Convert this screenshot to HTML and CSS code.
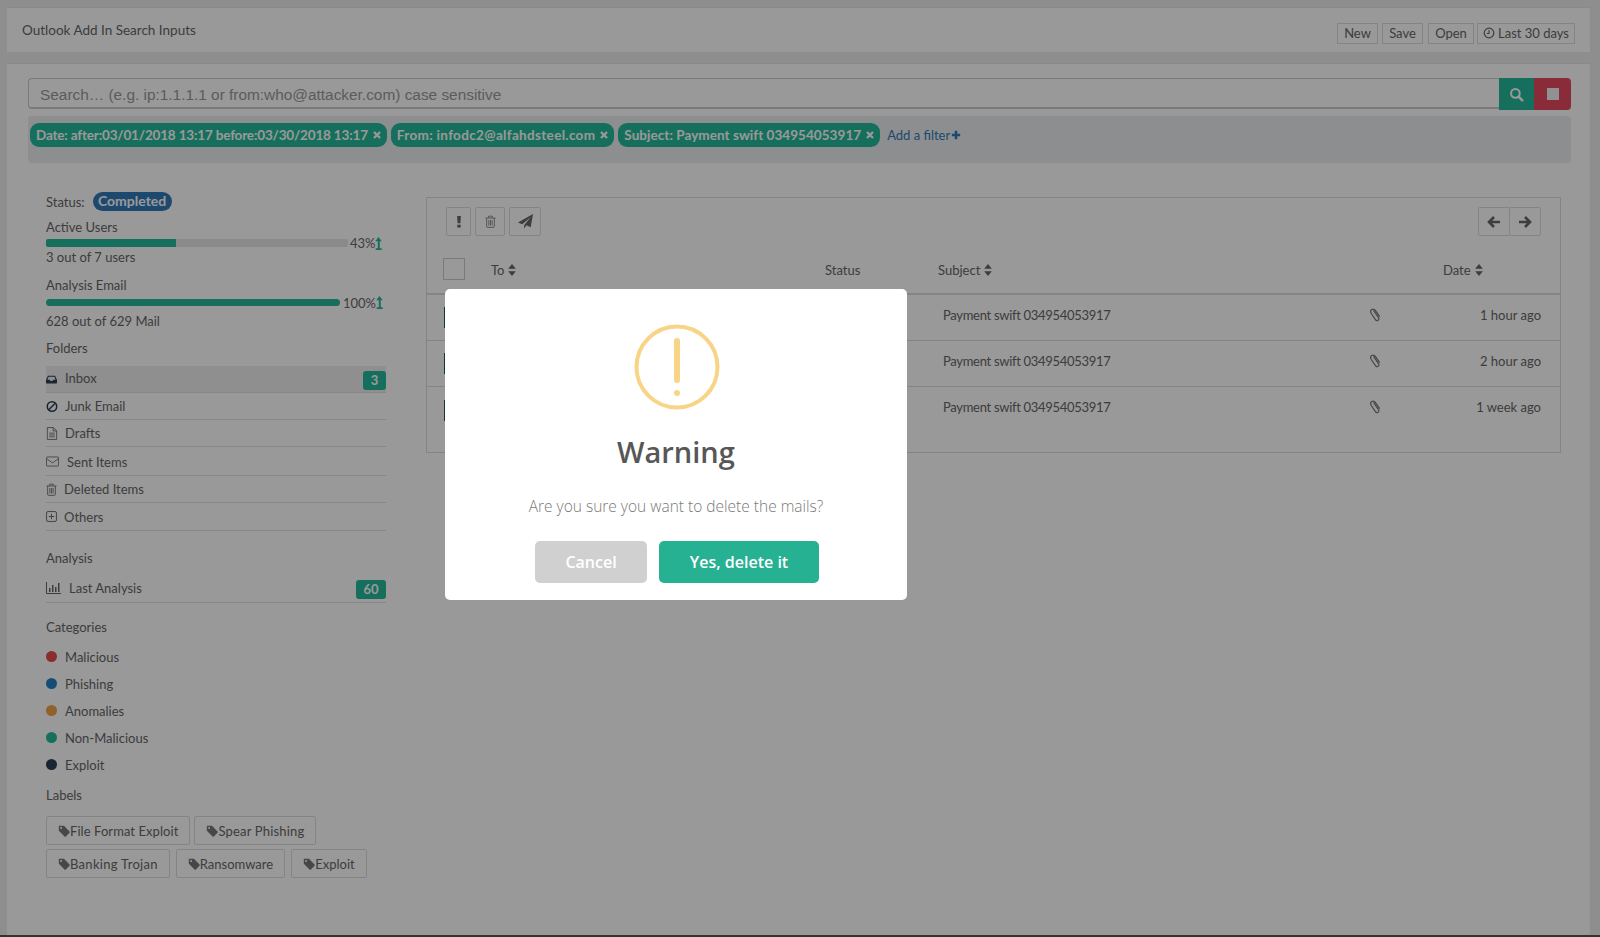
FILE: index.html
```html
<!DOCTYPE html>
<html lang="en">
<head>
<meta charset="utf-8">
<title>Outlook Add In Search Inputs</title>
<link rel="stylesheet" href="styles.css">
</head>
<body>
<svg class="sprite" width="0" height="0" aria-hidden="true">
  <symbol id="i-clock" viewBox="0 0 16 16"><circle cx="8" cy="8" r="6.4" fill="none" stroke="currentColor" stroke-width="1.6"/><path d="M8 4v4.6H5" fill="none" stroke="currentColor" stroke-width="1.4"/></symbol>
  <symbol id="i-x" viewBox="0 0 12 12"><path d="M2.4 2.4l7.2 7.2M9.6 2.4l-7.2 7.2" stroke="currentColor" stroke-width="2.8" fill="none"/></symbol>
  <symbol id="i-plus" viewBox="0 0 12 12"><path d="M6 1v10M1 6h10" stroke="currentColor" stroke-width="3" fill="none"/></symbol>
  <symbol id="i-search" viewBox="0 0 16 16"><circle cx="6.8" cy="6.8" r="4.6" fill="none" stroke="currentColor" stroke-width="2.2"/><path d="M10.2 10.2l4 4" stroke="currentColor" stroke-width="2.6" stroke-linecap="round"/></symbol>
  <symbol id="i-up" viewBox="0 0 8 14"><path d="M4.500 0L8 4.500H5.900v7.500H8v2H1.500v-2h2.300V4.500H1z" fill="currentColor"/></symbol>
  <symbol id="i-inbox" viewBox="0 0 16 14"><path d="M3.4 1.5h9.2c.4 0 .7.2.9.6L16 7.600V11.500c0 .8-.6 1.400-1.400 1.400H1.400C.6 12.900 0 12.300 0 11.500V7.600L2.500 2.100c.2-.4.500-.6.900-.6zM3.800 3L2 7.400h3.600L6.600 9.300h2.800l1-1.900H14L12.200 3z" fill="currentColor" fill-rule="evenodd"/></symbol>
  <symbol id="i-ban" viewBox="0 0 14 14"><circle cx="7" cy="7" r="5.500" fill="none" stroke="currentColor" stroke-width="1.800"/><path d="M3.200 10.800l7.600-7.600" stroke="currentColor" stroke-width="1.800"/></symbol>
  <symbol id="i-file" viewBox="0 0 12 14"><path d="M1 .6h6.500L11 4.100v9.300H1zM7.300.8v3.500H11M3 6.600h6M3 8.600h6M3 10.600h6" fill="none" stroke="currentColor" stroke-width=".9"/></symbol>
  <symbol id="i-mail" viewBox="0 0 14 11"><path d="M1.200.6h11.600c.4 0 .7.300.7.700v8.400c0 .4-.3.700-.7.700H1.200c-.4 0-.7-.3-.7-.7V1.300c0-.4.300-.7.700-.7zM.8 2.600L7 7l6.200-4.400" fill="none" stroke="currentColor" stroke-width=".9"/></symbol>
  <symbol id="i-trash" viewBox="0 0 12 14"><path d="M.5 3.200h11M4 3V1.200h4V3M1.800 3.300v9c0 .7.400 1.100 1 1.100h6.400c.6 0 1-.4 1-1.100v-9M4.200 5.400v6M6 5.400v6M7.800 5.400v6" fill="none" stroke="currentColor" stroke-width=".9"/></symbol>
  <symbol id="i-plusbox" viewBox="0 0 12 12"><rect x=".6" y=".6" width="10.800" height="10.800" rx="1.600" fill="none" stroke="currentColor"/><path d="M6 3v6M3 6h6" stroke="currentColor"/></symbol>
  <symbol id="i-chart" viewBox="0 0 15 12"><path d="M.5 0v11.500H15" fill="none" stroke="currentColor"/><path d="M3 6h1.500v4H3zM6 3h1.500v7H6zM9 5h1.500v5H9zM12 1h1.500v9H12z" fill="currentColor"/></symbol>
  <symbol id="i-tag" viewBox="0 0 12 12"><path d="M1.200.8h4.200c.3 0 .6.100.8.300l5.300 5.300c.4.400.4 1 0 1.400l-3.600 3.600c-.4.400-1 .4-1.400 0L1.100 6.100C.9 5.900.8 5.600.8 5.300V1.200c0-.2.200-.4.400-.4zM3.100 2.100a1 1 0 1 0 0 2 1 1 0 0 0 0-2z" fill="currentColor" fill-rule="evenodd"/></symbol>
  <symbol id="i-bang" viewBox="0 0 6 14"><path d="M1 1h4l-.5 8h-3zM1.200 10.500h3.600V13.500H1.200z" fill="currentColor"/></symbol>
  <symbol id="i-send" viewBox="0 0 16 16"><path d="M16 0L13.500 14 9 12l-2.500 3.500V12l7-8.500L4.500 10.800 0 9z" fill="currentColor"/></symbol>
  <symbol id="i-left" viewBox="0 0 14 14"><path d="M7 2L2 7l5 5M2.500 7H13" fill="none" stroke="currentColor" stroke-width="2.600"/></symbol>
  <symbol id="i-right" viewBox="0 0 14 14"><path d="M7 2l5 5-5 5M11.500 7H1" fill="none" stroke="currentColor" stroke-width="2.600"/></symbol>
  <symbol id="i-sort" viewBox="0 0 8 12"><path d="M4 0l3.800 4.800H.2zM4 12L.2 7.200h7.600z" fill="currentColor"/></symbol>
  <symbol id="i-clip" viewBox="0 0 12 14"><path d="M3.500 3.400l5 7.200c.7 1 .4 2.100-.4 2.600-.9.600-2 .4-2.700-.6L1.300 6.500C.3 5 .6 3.400 1.800 2.600c1.200-.8 2.700-.5 3.700 1l4.200 6.100" fill="none" stroke="currentColor" stroke-width="1.200" transform="translate(1 -1)"/></symbol>
</svg>

<div class="app">
  <header class="topbar">
    <h1 class="page-title">Outlook Add In Search Inputs</h1>
    <div class="top-actions">
      <button class="btn-top new">New</button>
      <button class="btn-top save">Save</button>
      <button class="btn-top open">Open</button>
      <button class="btn-top range"><svg class="ic-clock"><use href="#i-clock"/></svg>Last 30 days</button>
    </div>
  </header>

  <main class="panel">
    <div class="search">
      <input class="search-input" type="text" placeholder="Search… (e.g. ip:1.1.1.1 or from:who@attacker.com) case sensitive">
      <button class="search-go"><svg class="ic-search"><use href="#i-search"/></svg></button>
      <button class="search-stop"><span class="stop-square"></span></button>
    </div>
    <div class="filters">
      <span class="chip chip-date">Date: after:03/01/2018 13:17 before:03/30/2018 13:17<svg class="ic-x"><use href="#i-x"/></svg></span>
      <span class="chip chip-from">From: infodc2@alfahdsteel.com<svg class="ic-x"><use href="#i-x"/></svg></span>
      <span class="chip chip-subject">Subject: Payment swift 034954053917<svg class="ic-x"><use href="#i-x"/></svg></span>
      <a class="add-filter">Add a filter<svg class="ic-plus"><use href="#i-plus"/></svg></a>
    </div>

    <div class="content">
      <aside class="sidebar">
        <div class="status-row"><span>Status:</span><span class="pill">Completed</span></div>

        <div class="label active-label">Active Users</div>
        <div class="stat stat-a">
          <div class="track"><div class="fill" style="width:43%"></div></div>
          <span class="pct">43%</span><svg class="ic-up"><use href="#i-up"/></svg>
        </div>
        <div class="label">3 out of 7 users</div>

        <div class="label analysis-label">Analysis Email</div>
        <div class="stat stat-b">
          <div class="track"><div class="fill full" style="width:100%"></div></div>
          <span class="pct">100%</span><svg class="ic-up"><use href="#i-up"/></svg>
        </div>
        <div class="label mail-label">628 out of 629 Mail</div>

        <div class="label folders-label">Folders</div>
        <ul class="nav">
          <li class="nav-item selected h27"><svg class="ni w16 dark"><use href="#i-inbox"/></svg><span class="t3">Inbox</span><b class="count">3</b></li>
          <li class="nav-item h27"><svg class="ni w12 dark"><use href="#i-ban"/></svg><span class="t7">Junk Email</span></li>
          <li class="nav-item h27"><svg class="ni w12"><use href="#i-file"/></svg><span class="t7">Drafts</span></li>
          <li class="nav-item h29"><svg class="ni w14"><use href="#i-mail"/></svg><span class="t7 sent">Sent Items</span></li>
          <li class="nav-item h27"><svg class="ni w11"><use href="#i-trash"/></svg><span class="t7">Deleted Items</span></li>
          <li class="nav-item h28"><svg class="ni w11"><use href="#i-plusbox"/></svg><span class="t7">Others</span></li>
        </ul>

        <div class="label analysis-head">Analysis</div>
        <ul class="nav nav-analysis">
          <li class="nav-item h29"><svg class="ni w15"><use href="#i-chart"/></svg><span class="t8">Last Analysis</span><b class="count">60</b></li>
        </ul>

        <div class="label categories-head">Categories</div>
        <ul class="cats">
          <li class="cat"><i class="dot red"></i>Malicious</li>
          <li class="cat"><i class="dot blue"></i>Phishing</li>
          <li class="cat"><i class="dot orange"></i>Anomalies</li>
          <li class="cat"><i class="dot green"></i>Non-Malicious</li>
          <li class="cat"><i class="dot navy"></i>Exploit</li>
        </ul>

        <div class="label labels-head">Labels</div>
        <div class="tags">
          <span class="tag tag-file"><svg class="ic-tag"><use href="#i-tag"/></svg>File Format Exploit</span>
          <span class="tag"><svg class="ic-tag"><use href="#i-tag"/></svg>Spear Phishing</span>
          <span class="tag tag-bank"><svg class="ic-tag"><use href="#i-tag"/></svg>Banking Trojan</span>
          <span class="tag tag-ransom"><svg class="ic-tag"><use href="#i-tag"/></svg>Ransomware</span>
          <span class="tag tag-ransom"><svg class="ic-tag"><use href="#i-tag"/></svg>Exploit</span>
        </div>
      </aside>

      <section class="mail">
        <div class="toolbar">
          <div class="tool-group">
            <button class="tool b1"><svg class="ic-bang"><use href="#i-bang"/></svg></button>
            <button class="tool b2"><svg class="ic-trash"><use href="#i-trash"/></svg></button>
            <button class="tool b3"><svg class="ic-send"><use href="#i-send"/></svg></button>
          </div>
          <div class="pager">
            <button class="page-btn"><svg class="ic-arrow"><use href="#i-left"/></svg></button>
            <button class="page-btn"><svg class="ic-arrow"><use href="#i-right"/></svg></button>
          </div>
        </div>
        <div class="mail-grid mail-head">
          <div><span class="head-check"></span></div>
          <div>To<svg class="ic-sort"><use href="#i-sort"/></svg></div>
          <div>Status</div>
          <div>Subject<svg class="ic-sort"><use href="#i-sort"/></svg></div>
          <div></div>
          <div>Date<svg class="ic-sort"><use href="#i-sort"/></svg></div>
        </div>
        <div class="mail-grid mail-row">
          <div><span class="row-check"></span></div><div></div><div></div>
          <div class="subject">Payment swift 034954053917</div>
          <div><svg class="ic-clip"><use href="#i-clip"/></svg></div>
          <div class="when">1 hour ago</div>
        </div>
        <div class="mail-grid mail-row">
          <div><span class="row-check"></span></div><div></div><div></div>
          <div class="subject">Payment swift 034954053917</div>
          <div><svg class="ic-clip"><use href="#i-clip"/></svg></div>
          <div class="when">2 hour ago</div>
        </div>
        <div class="mail-grid mail-row last">
          <div><span class="row-check"></span></div><div></div><div></div>
          <div class="subject">Payment swift 034954053917</div>
          <div><svg class="ic-clip"><use href="#i-clip"/></svg></div>
          <div class="when">1 week ago</div>
        </div>
      </section>
    </div>
  </main>
</div>

<div class="overlay">
  <div class="modal">
    <svg class="warn" viewBox="0 0 86 86" aria-hidden="true">
      <circle cx="43" cy="43" r="40.500" fill="none" stroke="#f8d486" stroke-width="4"/>
      <rect x="40" y="14" width="6" height="45" rx="3" fill="#f8d486"/>
      <circle cx="43" cy="69" r="3" fill="#f8d486"/>
    </svg>
    <h2 class="modal-title">Warning</h2>
    <p class="modal-text">Are you sure you want to delete the mails?</p>
    <div class="modal-actions">
      <button class="m-btn cancel">Cancel</button>
      <button class="m-btn confirm">Yes, delete it</button>
    </div>
  </div>
</div>
</body>
</html>
```
FILE: styles.css
```css
* { box-sizing: border-box; }
html, body { margin: 0; padding: 0; }
body {
  width: 1600px; height: 937px; overflow: hidden;
  background: #ededed; color: #666;
  font-family: Lato, "Open Sans", sans-serif; font-size: 13px;
}
.sprite { position: absolute; }
ul { list-style: none; margin: 0; padding: 0; }
button { font-family: inherit; cursor: pointer; }
svg { display: inline-block; flex: none; }

.app {
  height: 937px; padding: 7px 10px 0 7px;
  border-bottom: 2px solid #555;
  display: flex; flex-direction: column; gap: 11px;
}
.topbar {
  height: 45px; flex: none; background: #fff;
  display: flex; align-items: center; justify-content: space-between;
  padding: 0 15px;
  border-top: 1px solid #e6e6e6;
}
.page-title { margin: 0; font-size: 13.500px; font-weight: 400; color: #666; }
.top-actions { display: flex; align-items: center; margin-top: 6px; gap: 4px; }
.btn-top {
  height: 21px; padding: 0; font-size: 13px; color: #666;
  background: #fff; border: 1px solid #ddd; display: flex; align-items: center; justify-content: center;
}
.new { width: 41px; } .save { width: 41px; margin-right: 1px; } .open { width: 46px; margin-right: -1px; } .range { width: 98px; gap: 3px; }
.ic-clock { width: 12px; height: 12px; }

.panel {
  flex: 1; background: #fff; border-top: 1px solid #e6e6e6;
  padding: 14px 19px 0 21px;
}
.search { display: flex; height: 31px; }
.search-input {
  flex: 1; min-width: 0; height: 31px; padding: 3px 11px 0 11px;
  border: 1px solid #ccc; border-bottom-width: 2px; border-right: 0; border-radius: 4px 0 0 4px; outline: none;
  font-family: "Liberation Sans", sans-serif; font-size: 15.400px; color: #777;
}
.search-input::placeholder { color: #999; opacity: 1; }
.search-go, .search-stop { border: 0; padding: 0; display: flex; align-items: center; justify-content: center; color: #fff; height: 32px; }
.search-go { width: 35px; background: #26b99a; padding-right: 1px; }
.search-stop { width: 37px; background: #e5495f; border-radius: 0 4px 4px 0; }
.ic-search { width: 15px; height: 15px; }
.stop-square { width: 12px; height: 12px; background: #f2f2f2; }

.filters {
  height: 47px; margin-top: 7px; padding: 7px 2px; background: #ebedf0; border-radius: 4px;
  display: flex; align-items: flex-start; gap: 4px;
}
.chip {
  height: 24px; padding: 0 5px 0 6px; border-radius: 9px; background: #26b99a; color: #fff;
  font-weight: 700; font-size: 13.500px; display: flex; align-items: center; gap: 4px; white-space: nowrap;
}
.chip-date { letter-spacing: -.17px; }
.chip-from { letter-spacing: .33px; }
.chip-subject { letter-spacing: .05px; }
.ic-x { width: 10px; height: 10px; }
.add-filter { margin: 4px 0 0 3px; color: #337ab7; display: flex; align-items: center; gap: 1px; font-size: 13px; }
.ic-plus { width: 10px; height: 10px; }

.content { display: flex; padding: 29px 10px 0 18px; }
.sidebar { width: 340px; flex: none; }
.label { height: 16px; line-height: 16px; }
.status-row { height: 19px; display: flex; align-items: center; gap: 8px; }
.pill { height: 19px; width: 79px; border-radius: 10px; background: #337ab7; color: #fff; font-weight: 700; font-size: 14px; text-align: center; line-height: 18px; }
.active-label { margin-top: 8px; }
.stat { display: flex; align-items: center; color: #666; }
.stat-a { height: 8px; margin: 4px 0 2px; }
.stat-a .track { width: 302px; height: 8px; }
.stat-b { height: 7px; margin: 6px 0 7px; }
.stat-b .track { width: 294px; height: 7px; }
.track { background: #e6e6e6; border-radius: 2px; overflow: hidden; }
.stat-b .track { background: #26b99a; border-radius: 4px; }
.fill { height: 100%; background: #26b99a; }
.pct { margin-left: 2px; width: 32px; line-height: 8px; font-size: 13px; }
.stat-b .pct { width: 33px; margin-left: 3px; }
.stat-a .pct { width: 25px; }
.ic-up { width: 8px; height: 13px; color: #26b99a; margin-left: -1px; }
.analysis-label { margin-top: 12px; }
.folders-label { margin-top: 11px; }
.nav { margin-top: 10px; }
.nav-item {
  display: flex; align-items: center; position: relative;
  border-bottom: 1px solid #e0e0e0;
}
.h27 { height: 27px; } .h28 { height: 28px; } .h29 { height: 29px; }
.selected { background: #eee; }
.selected .t3 { margin-top: -2px; }
.ni { height: 13px; color: #666; }
.dark { color: #2a3f54; }
.w16 { width: 11px; } .w12 { width: 12px; } .w14 { width: 13px; height: 11px; } .w11 { width: 11px; } .w15 { width: 15px; height: 12px; }
.nav-item span { margin-left: 7px; }
.nav-item .t3 { margin-left: 8px; }
.nav-item .t8 { margin-left: 8px; }
.nav-item .sent { margin-left: 8px; padding-top: 2px; }
.count {
  margin: 2px 0 0 auto; height: 19px; min-width: 23px; padding: 0 7.500px; border-radius: 3px;
  background: #26b99a; color: #fff; font-size: 13px; font-weight: 700; text-align: center; line-height: 19px;
}
.analysis-head { margin-top: 19px; }
.nav-analysis { margin-top: 8px; }
.categories-head { margin-top: 16px; }
.cats { margin-top: 8px; }
.cat { height: 27px; display: flex; align-items: center; gap: 8px; }
.dot { width: 11px; height: 11px; border-radius: 50%; }
.red { background: #e74c4c; } .blue { background: #2383c4; } .orange { background: #f0a04b; } .green { background: #26b99a; } .navy { background: #2a3f54; }
.labels-head { margin-top: 9px; }
.tags { margin-top: 13px; display: flex; flex-wrap: wrap; gap: 4px 5px; width: 330px; letter-spacing: .18px; }
.tag {
  height: 29px; padding: 0 11px; border: 1px solid #ddd; border-radius: 2px;
  display: flex; align-items: center; gap: 0;
}
.tag-file { letter-spacing: .07px; margin-right: -1px; }
.tag-bank { letter-spacing: .3px; margin-right: 1px; }
.tag-ransom { letter-spacing: 0; margin-right: 1px; }
.ic-tag { width: 12px; height: 12px; color: #777; }

.mail { flex: 1; margin: 5px 0 0 40px; border: 1px solid #ddd; height: 256px; }
.toolbar { height: 53px; padding: 9px 19px 0 19px; display: flex; justify-content: space-between; align-items: flex-start; }
.tool-group { display: flex; gap: 4px; }
.tool, .page-btn { height: 29px; padding: 0; background: #fff; border: 1px solid #ddd; border-radius: 2px; display: flex; align-items: center; justify-content: center; color: #666; }
.b1 { width: 25px; } .b2 { width: 30px; } .b3 { width: 32px; }
.ic-bang { width: 6px; height: 13px; }
.ic-trash { width: 11px; height: 13px; color: #777; }
.ic-send { width: 15px; height: 15px; }
.pager { display: flex; margin-left: -1px; }
.page-btn { width: 32px; }
.page-btn + .page-btn { margin-left: -1px; }
.ic-arrow { width: 14px; height: 14px; }

.mail-grid { display: grid; grid-template-columns: 64px 334px 113px 431px 74px 1fr; align-items: center; }
.mail-head { height: 44px; padding-bottom: 4px; border-bottom: 2px solid #ddd; }
.mail-head > div { display: flex; align-items: center; gap: 4px; }
.head-check { width: 22px; height: 22px; margin: 0 0 2px 16px; border: 1px solid #ccc; }
.ic-sort { width: 8px; height: 12px; }
.mail-row { height: 46px; border-bottom: 1px solid #ddd; color: #666; }
.mail-row.last { border-bottom: 0; }
.row-check { display: block; width: 20px; height: 21px; margin: 0 0 0 17px; background: #1a5f50; }
.subject { padding-left: 5px; margin-top: -6px; letter-spacing: -.3px; }
.when { text-align: right; padding-right: 19px; margin-top: -6px; }
.ic-clip { width: 12px; height: 14px; color: #777; margin-top: -6px; display: block; }

.overlay { position: fixed; inset: 0; background: rgba(0,0,0,.4); }
.modal {
  position: absolute; left: 445px; top: 289px; width: 462px; height: 311px;
  background: #fff; border-radius: 5px;
  display: flex; flex-direction: column; align-items: center;
  padding-top: 35px; font-family: "Open Sans", sans-serif;
}
.warn { width: 86px; height: 86px; margin-left: 1px; }
.modal-title { margin: 21px 0 0; font-size: 29px; line-height: 42px; font-weight: 600; color: #575757; }
.modal-text { margin: 22px 0 0; font-size: 15.500px; line-height: 22px; font-weight: 300; color: #797979; }
.modal-actions { margin-top: 24px; display: flex; gap: 12px; margin-left: 2px; }
.m-btn { height: 42px; border: 0; border-radius: 5px; color: #fff; font-size: 16px; font-weight: 600; font-family: inherit; }
.cancel { width: 112px; background: #d0d0d0; }
.confirm { width: 160px; background: #26b192; }
```
